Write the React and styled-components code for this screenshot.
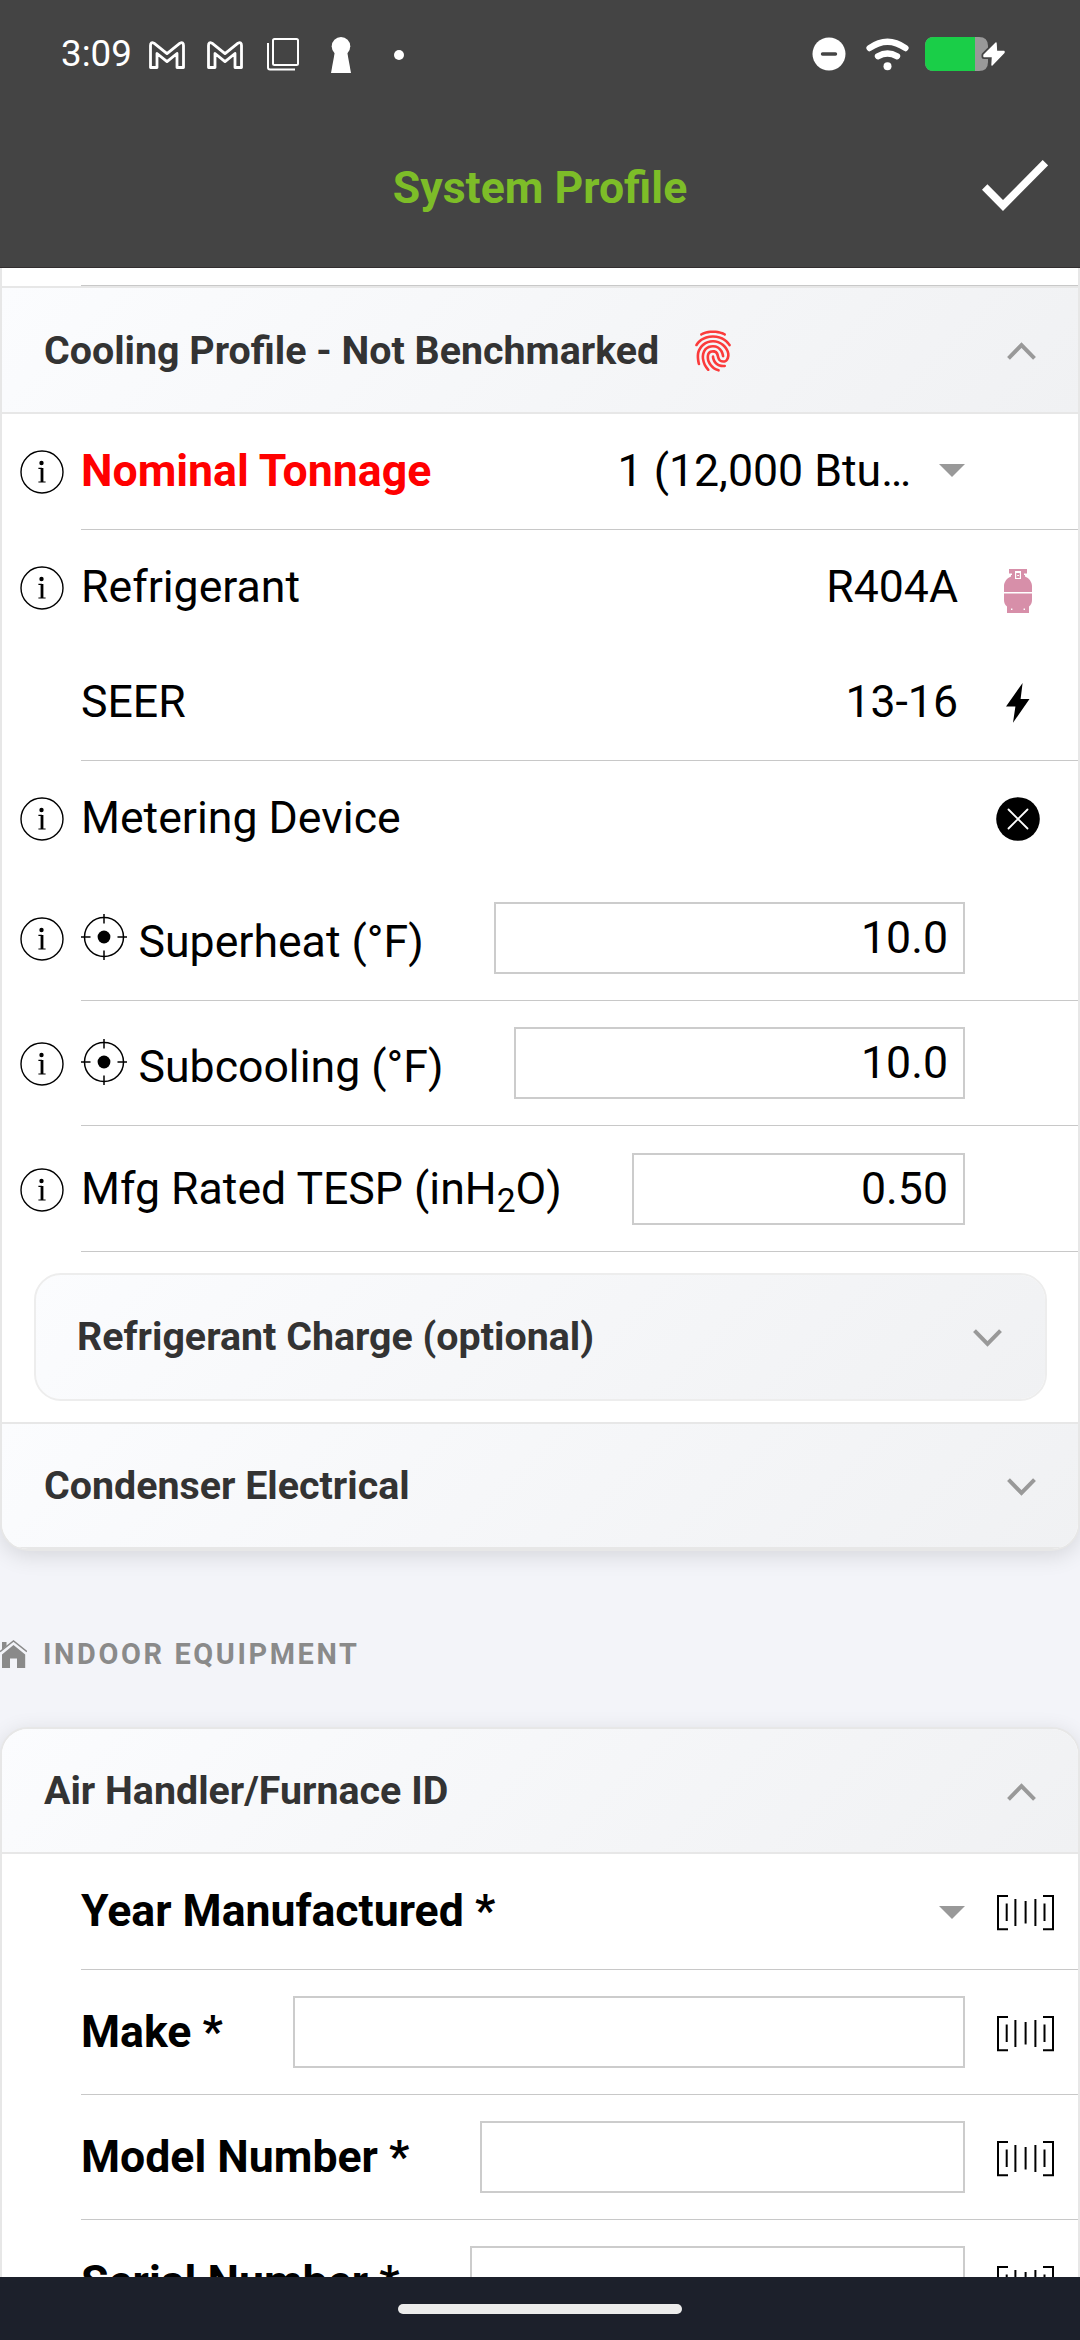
import React from 'react'
import styled, { createGlobalStyle, css } from 'styled-components'
import { IoFingerPrint } from 'react-icons/io5'

const GlobalStyle = createGlobalStyle`
    * {
        box-sizing: border-box;
    }

    body {
        margin: 0;
        background: #f3f4f9;
        font-family: Roboto, "Liberation Sans", sans-serif;
        color: #000;
    }

    svg {
        display: block;
        flex-shrink: 0;
    }
`

/* ---------- icons ---------- */

const GmailIcon = () => (
    <svg width="36" height="28" viewBox="0 0 36 28" fill="none" stroke="#fff" strokeWidth="2.8" strokeLinejoin="round">
        <path d="M1.5 4.5 Q1.5 .6 5 2.2 L18 12.6 L31 2.2 Q34.5 .6 34.5 4.5 V26.5 H28 V12.5 L18 20.6 L8 12.5 V26.5 H1.5 Z" />
    </svg>
)

const CopiesIcon = () => (
    <svg width="32" height="33" viewBox="0 0 32 33" fill="none" stroke="#fff" strokeWidth="2">
        <rect x="6" y="1" width="25" height="26" rx="1.5" />
        <path d="M1 5 V29.5 Q1 31.5 3 31.5 H28" />
    </svg>
)

const KeyholeIcon = () => (
    <svg width="20" height="36" viewBox="0 0 20 36" fill="#fff">
        <circle cx="10" cy="9.3" r="9.3" />
        <path d="M4 14 L0 36 H20 L16 14 Z" />
    </svg>
)

const DndIcon = () => (
    <svg width="34" height="34" viewBox="0 0 34 34">
        <circle cx="17" cy="17" r="16.5" fill="#fff" />
        <path d="M10.5 17 H23.5" stroke="#444" strokeWidth="3.4" strokeLinecap="round" />
    </svg>
)

const WifiIcon = () => (
    <svg width="43" height="33" viewBox="0 0 43 33" fill="none" stroke="#fff" strokeWidth="6.4" strokeLinecap="round">
        <path d="M3.6 10 Q21.5 -2.6 39.4 10" />
        <path d="M12 18.2 Q21.5 12.8 31 18.2" />
        <circle cx="21.5" cy="28.2" r="4" fill="#fff" stroke="none" />
    </svg>
)

const BatteryIcon = () => (
    <svg width="80" height="34" viewBox="0 0 80 34">
        <path d="M9 0 H54 Q63 0 63 9 V25 Q63 34 54 34 H9 Q0 34 0 25 V9 Q0 0 9 0 Z" fill="#999" />
        <path d="M9 0 H50 V34 H9 Q0 34 0 25 V9 Q0 0 9 0 Z" fill="#1ace48" />
        <path d="M71 6 L59 18 V19.5 H67.5 L67 28 L79 15.5 V14.5 H71.5 Z" fill="#444" stroke="#444" strokeWidth="5" strokeLinejoin="round" />
        <path d="M71 6 L59 18 V19.5 H67.5 L67 28 L79 15.5 V14.5 H71.5 Z" fill="#fff" stroke="#fff" strokeWidth="1.4" strokeLinejoin="round" />
    </svg>
)

const CheckIcon = () => (
    <svg width="66" height="51" viewBox="0 0 66 51" fill="none" stroke="#fff" strokeWidth="7.6">
        <path d="M2.7 27 L21 45.5 L63.4 2.7" />
    </svg>
)

const Chevron = ({ up }) => (
    <svg width="29" height="18" viewBox="0 0 29 18" fill="none" stroke="#999" strokeWidth="4">
        <path d={up ? 'M1.5 16.3 L14.5 3 L27.5 16.3' : 'M1.5 1.7 L14.5 15 L27.5 1.7'} />
    </svg>
)

const InfoIcon = () => (
    <svg width="44" height="44" viewBox="0 0 44 44" fill="none" stroke="#000">
        <circle cx="22" cy="22" r="21" strokeWidth="1.4" />
        <circle cx="21.5" cy="13" r="2.2" fill="#000" stroke="none" />
        <path d="M22 18 V32" strokeWidth="2.8" />
        <path d="M18.4 18.4 H22 M18.4 32 H25.6" strokeWidth="1.2" />
    </svg>
)

const TargetIcon = () => (
    <svg width="46" height="46" viewBox="0 0 46 46" fill="none" stroke="#000" strokeWidth="1.5">
        <circle cx="23" cy="23" r="19.5" />
        <circle cx="23" cy="23" r="6.4" fill="#000" stroke="none" />
        <path d="M23 0 V9.5 M23 36.5 V46 M0 23 H9.5 M36.5 23 H46" />
    </svg>
)

// the drawing sits low in its box, the flash one a little high
const TankIcon = () => (
    <svg width="28" height="49" viewBox="0 -5 28 49" fill="#d78fa9">
        <path d="M5 0 H23 V5 H21 V7.5 C25 9 28 13 28 17 V31 C28 34 27 36 25 37.5 V44 H3 V37.5 C1 36 0 34 0 31 V17 C0 13 3 9 7 7.5 V5 H5 Z" />
        <path d="M11 2 H17 V10 H11 Z M5 4.6 H8 V6 H5 Z M20 4.6 H23 V6 H20 Z M0 23 H28 V24.4 H0 Z M7 39.6 H8.4 V41 H7 Z M19.6 39.6 H21 V41 H19.6 Z" fill="#fff" />
        <path d="M12.2 4 H15.8 V9 H12.2 Z" />
        <path d="M13.2 6 H15 V7 H13.2 Z" fill="#fff" />
    </svg>
)

const FlashIcon = () => (
    <svg width="24" height="42" viewBox="0 0 24 42">
        <path d="M16.6 0 L14.6 16 H23.5 L7 39.8 L9.4 23.4 H0 Z" />
    </svg>
)

const ClearIcon = () => (
    <svg width="44" height="44" viewBox="0 0 44 44">
        <circle cx="22" cy="22" r="21.8" />
        <path d="M12.5 12.5 L31.5 31.5 M31.5 12.5 L12.5 31.5" stroke="#fff" strokeWidth="1.8" strokeLinecap="round" />
    </svg>
)

const BarcodeIcon = () => (
    <svg width="59" height="37" viewBox="0 0 59 37" fill="none" stroke="#000" strokeWidth="2">
        <path d="M12 2 H2 V35.2 H12" />
        <path d="M47 2 H57 V35.2 H47" />
        <path d="M10.7 9.5 V27 M19.4 5 V32 M29.6 7 V29.5 M39.4 5 V32 M48.5 9.5 V27" />
    </svg>
)

const HomeIcon = () => (
    <svg width="27" height="28" viewBox="0 0 27 28" fill="#8a8a8a">
        <path d="M2 2 H6.5 V6 L2 9.6 Z" />
        <path d="M2 14.5 L13.5 5 L25.2 14.5 V28 H17 V18.5 H10 V28 H2 Z" />
        <path d="M0 11.6 L13.5 1 L27 11.6" fill="none" stroke="#8a8a8a" strokeWidth="1.5" />
    </svg>
)

/* ---------- rows ---------- */

function Field({ label, info, target, required, alert, height, shift, lift, line = true, kind, value, action }) {
    return (
        <Row $height={height} $shift={shift}>
            <InfoCell>{info && <InfoIcon />}</InfoCell>
            <RowBody $line={line}>
                <Label $bold={required || alert} $alert={alert} $target={target} $lift={lift}>
                    {target && <TargetIcon />}
                    <span>{label}</span>
                </Label>
                {kind === 'input' && <Input>{value}</Input>}
                {kind === 'select' && (
                    <Select>
                        <SelectValue $lift={lift}>{value}</SelectValue>
                        <Caret $low={required} />
                    </Select>
                )}
                {kind === 'text' && <Value $lift={lift}>{value}</Value>}
                <Action>{action}</Action>
            </RowBody>
        </Row>
    )
}

function Accordion({ title, open, badge, nested, last }) {
    return (
        <AccordionHeader $nested={nested} $last={last}>
            <AccordionTitle $low={!!badge}>{title}</AccordionTitle>
            {badge}
            <ChevronSlot>
                <Chevron up={open} />
            </ChevronSlot>
        </AccordionHeader>
    )
}

function App() {
    return (
        <Screen>
            <GlobalStyle />
            <Header>
                <StatusBar>
                    <Time>3:09</Time>
                    <Slot><GmailIcon /></Slot>
                    <Slot><GmailIcon /></Slot>
                    <Slot><CopiesIcon /></Slot>
                    <Slot><KeyholeIcon /></Slot>
                    <Slot><Dot /></Slot>
                    <StatusRight>
                        <DndIcon />
                        <WifiIcon />
                        <BatteryIcon />
                    </StatusRight>
                </StatusBar>
                <TitleBar>
                    <span />
                    <Title>System Profile</Title>
                    <CheckIcon />
                </TitleBar>
            </Header>

            <Content>
                <Card $continued>
                    <PreviousRow />
                    <Accordion title="Cooling Profile - Not Benchmarked" open badge={<Fingerprint />} />
                    <Field label="Nominal Tonnage" info alert lift height={116} kind="select" value="1 (12,000 Btu…" />
                    <Field label="Refrigerant" info lift height={116} line={false} kind="text" value="R404A" action={<TankIcon />} />
                    <Field label="SEER" lift height={115} kind="text" value="13-16" action={<FlashIcon />} />
                    <Field label="Metering Device" info height={115} line={false} kind="text" action={<ClearIcon />} />
                    <Field label="Superheat (°F)" info target height={125} kind="input" value="10.0" />
                    <Field label="Subcooling (°F)" info target height={125} kind="input" value="10.0" />
                    <Field
                        label={<>Mfg Rated TESP (inH<Sub>2</Sub>O)</>}
                        info
                        height={126}
                        shift={1}
                        kind="input"
                        value="0.50"
                    />
                    <NestedBox>
                        <Accordion title="Refrigerant Charge (optional)" nested />
                    </NestedBox>
                    <Accordion title="Condenser Electrical" last />
                </Card>

                <SectionTitle>
                    <HomeIcon />
                    <span>INDOOR EQUIPMENT</span>
                </SectionTitle>

                <Card>
                    <Accordion title="Air Handler/Furnace ID" open last />
                    <Field label="Year Manufactured *" required lift height={116} kind="select" action={<BarcodeIcon />} />
                    <Field label="Make *" required height={125} kind="input" action={<BarcodeIcon />} />
                    <Field label="Model Number *" required height={125} kind="input" action={<BarcodeIcon />} />
                    <Field label="Serial Number *" required height={125} kind="input" action={<BarcodeIcon />} />
                </Card>
            </Content>

            <NavBar>
                <Pill />
            </NavBar>
        </Screen>
    )
}

export default App

const Screen = styled.div`
    display: flex;
    flex-direction: column;
    width: 1080px;
    height: 2340px;
    overflow: hidden;
`

const Header = styled.header`
    flex: none;
    height: 268px;
    background: #444;
    border-bottom: 1px solid #322e2f;
`

const StatusBar = styled.div`
    display: flex;
    align-items: center;
    height: 108px;
    padding: 0 75px 0 61px;
`

const Time = styled.div`
    width: 77px;
    color: #fff;
    font-size: 36.75px;
    line-height: 44px;
    white-space: nowrap;
    margin-bottom: 1px;
`

const Slot = styled.div`
    display: flex;
    align-items: center;
    justify-content: center;
    width: 58px;
    padding-top: 1px;
`

const Dot = styled.div`
    width: 10px;
    height: 10px;
    border-radius: 50%;
    background: #fff;
    margin-top: 1px;
`

const StatusRight = styled.div`
    display: flex;
    align-items: center;
    margin-left: auto;

    svg + svg {
        margin-left: 20px;
    }

    svg:last-child {
        margin-left: 16px;
    }
`

const TitleBar = styled.div`
    display: grid;
    grid-template-columns: 66px 1fr 66px;
    align-items: center;
    height: 155px;
    padding: 0 32px;
`

const Title = styled.h1`
    margin: 5px 0 0;
    text-align: center;
    color: #7dbd28;
    font-size: 44.625px;
    font-weight: 700;
    line-height: 52px;
`

const Content = styled.main`
    flex: 1;
    min-height: 0;
    overflow: hidden;
`

const Card = styled.section`
    background: #fff;
    border: 2px solid #e7e7e7;
    border-radius: 28px;
    overflow: hidden;
    box-shadow: 0 5px 22px rgba(0, 0, 0, .12);

    ${({ $continued }) => $continued && css`
        border-top: 0;
        border-top-left-radius: 0;
        border-top-right-radius: 0;
    `}
`

const PreviousRow = styled.div`
    height: 18px;
    margin-left: 79px;
    border-bottom: 1px solid #c8c8c8;
`

const AccordionHeader = styled.div`
    display: flex;
    align-items: center;
    height: 128px;
    padding: 0 42px;
    background: linear-gradient(135deg, #fbfcfe 0%, #f0f1f3 100%);
    background-clip: padding-box;
    border-top: 2px solid #e7e7e7;
    border-bottom: 2px solid #e7e7e7;

    ${({ $last }) => $last && css`
        height: 127px;
    `}

    ${Card}:not(:first-child) > & {
        height: 125px;
        border-top: 0;
    }

    ${({ $nested }) => $nested && css`
        border: 2px solid #ededed;
        border-radius: 27px;
        padding: 0 43px 0 41px;
    `}
`

const AccordionTitle = styled.h2`
    margin: ${({ $low }) => ($low ? 1 : 0)}px 0 0;
    color: #333;
    font-size: 39.375px;
    font-weight: 700;
    line-height: 46px;
    white-space: nowrap;
`

const ChevronSlot = styled.div`
    margin-left: auto;
    padding-top: 2px;
`

const Fingerprint = styled(IoFingerPrint)`
    width: 44px;
    height: 44px;
    margin: 2px 0 0 32px;
    color: #fb3b3b;
`

const NestedBox = styled.div`
    padding: 21px 31px 21px 32px;
`

const Row = styled.div`
    display: flex;
    height: ${({ $height }) => $height}px;
    padding-top: ${({ $shift }) => $shift || 0}px;
`

const InfoCell = styled.div`
    display: flex;
    align-items: center;
    flex: none;
    width: 79px;
    padding-left: 18px;
`

const RowBody = styled.div`
    display: flex;
    align-items: center;
    flex: 1;
    min-width: 0;
    border-bottom: 1px solid ${({ $line }) => ($line ? '#c8c8c8' : 'transparent')};
`

const Label = styled.div`
    display: flex;
    align-items: center;
    margin-bottom: ${({ $lift }) => ($lift ? 2 : 0)}px;
    font-size: 44.625px;
    line-height: 52px;
    white-space: nowrap;
    font-weight: ${({ $bold }) => ($bold ? 700 : 400)};
    color: ${({ $alert }) => ($alert ? '#f00' : '#000')};

    ${({ $target }) => $target && css`
        svg {
            margin: 0 11.5px 2px 0;
        }

        span {
            padding-top: 8px;
        }
    `}
`

const Sub = styled.sub`
    font-size: 33.5px;
    line-height: 0;
    vertical-align: baseline;
    display: inline-block;
    transform: translateY(8px);
`

const Input = styled.div`
    flex: 1;
    height: 72px;
    margin-left: 70.5px;
    padding: 0 15px;
    border: 2px solid #ccc;
    font-size: 44.625px;
    line-height: 68px;
    text-align: right;
`

const Select = styled.div`
    display: flex;
    align-items: center;
    justify-content: flex-end;
    flex: 1;
`

const SelectValue = styled.span`
    font-size: 44.625px;
    line-height: 52px;
    margin-right: 28px;
    margin-bottom: ${({ $lift }) => ($lift ? 2 : 0)}px;
`

const Caret = styled.i`
    border: 13px solid transparent;
    border-top-color: #999;
    border-bottom: 0;
    margin-top: ${({ $low }) => ($low ? 2 : -2)}px;
`

const Value = styled.div`
    flex: 1;
    margin-bottom: ${({ $lift }) => ($lift ? 2 : 0)}px;
    padding-right: 7px;
    font-size: 44.625px;
    line-height: 52px;
    text-align: right;
`

const Action = styled.div`
    display: grid;
    grid-template-columns: minmax(44px, max-content);
    justify-items: center;
    align-items: center;
    flex: none;
    width: 113px;
    padding: 2px 0 0 31px;
`

const SectionTitle = styled.div`
    display: flex;
    align-items: center;
    gap: 16px;
    height: 176px;
    padding-top: 30px;
    color: #8a8a8a;
    font-size: 28.875px;
    font-weight: 700;
    line-height: 34px;
    letter-spacing: 2.625px;
`

const NavBar = styled.footer`
    display: flex;
    justify-content: center;
    flex: none;
    height: 63px;
    padding-top: 27px;
    background: #1c202b;
`

const Pill = styled.div`
    width: 284px;
    height: 10px;
    border-radius: 5px;
    background: #ececec;
`
